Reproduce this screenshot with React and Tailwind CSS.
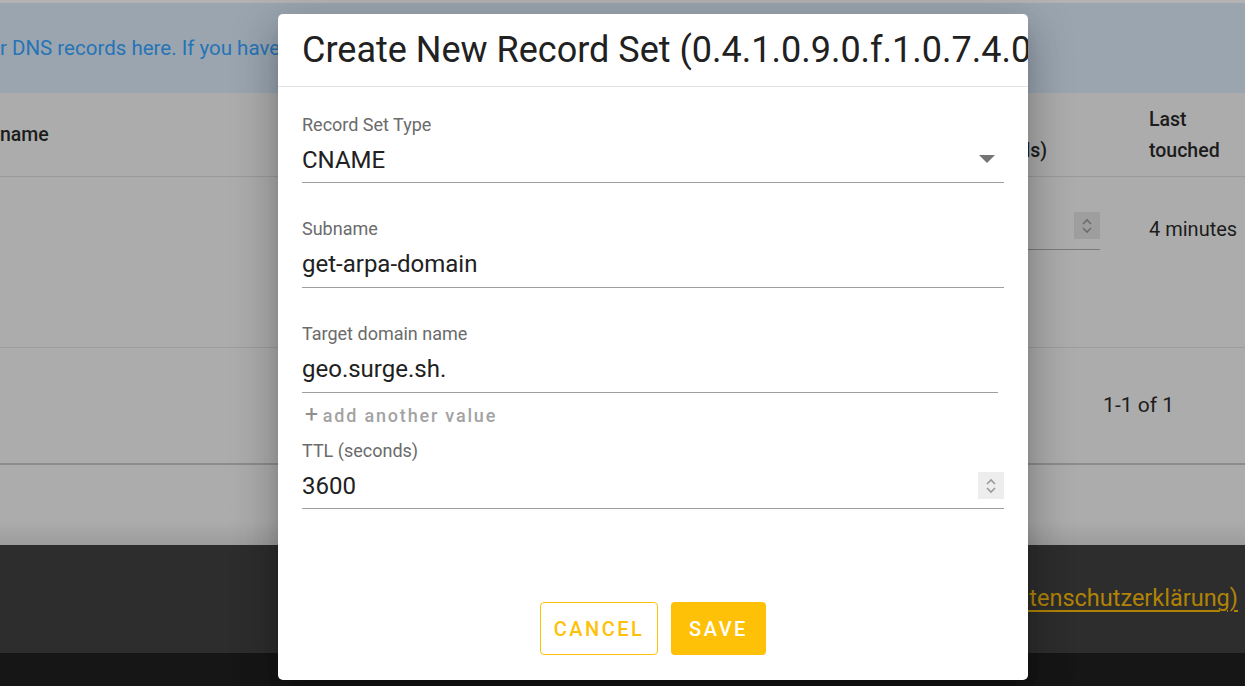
import React from 'react';

function Spinner({ bg = 'bg-[#ededed]', stroke = '#9a9a9a' }) {
  return (
    <div className={`flex h-[27px] w-[26px] flex-col items-center justify-center ${bg}`}>
      <svg width="12" height="18" viewBox="0 0 12 18" fill="none" stroke={stroke} strokeWidth="1.6">
        <path d="M2 7 L6 3 L10 7" />
        <path d="M2 11 L6 15 L10 11" />
      </svg>
    </div>
  );
}

function Field({ label, value, className = '', children, valueH = 'h-[47px]' }) {
  return (
    <div className={className}>
      <div className="h-[24px] text-[18px] leading-[24px] text-[#6b6b6b]">{label}</div>
      <div className={`flex items-center ${valueH} border-b border-[#9e9e9e] text-[24px] text-[#212121]`}>
        <span className="flex-1">{value}</span>
        {children}
      </div>
    </div>
  );
}

export default function App() {
  return (
    <div className="relative h-[686px] w-full overflow-hidden font-['Roboto',sans-serif]">
      {/* Page behind the dialog (already dimmed) */}
      <div className="flex h-full flex-col">
        <div className="h-[3px] bg-[#b3b3b3]" />
        <div className="flex h-[90px] items-center bg-[#9aa5b0] text-[20.5px] text-[#2674b6] whitespace-nowrap">
          r DNS records here. If you have any questions, please contact support.
        </div>
        <div className="flex h-[84px] items-center border-b border-[#9a9a9a] bg-[#acacac] text-[19.5px] font-medium text-[#1c1c1c]">
          <span>name</span>
          <div className="flex-1" />
          <div className="flex w-[121px] justify-end whitespace-nowrap pr-[102px] pt-[31px] leading-[31px]">(seconds)</div>
          <div className="w-[96px] leading-[31px]">
            Last
            <br />
            touched
          </div>
        </div>
        <div className="flex h-[171px] items-start border-b border-[#9c9c9c] bg-[#acacac] text-[20px] text-[#1c1c1c]">
          <div className="flex-1" />
          <div className="mr-[49px] mt-[35px] flex h-[38px] w-[72px] items-start justify-end border-b border-[#7a7a7a]">
            <Spinner bg="bg-[#9e9e9e]" stroke="#6c6c6c" />
          </div>
          <div className="mt-[40px] w-[96px] whitespace-nowrap leading-[24px]">4 minutes</div>
        </div>
        <div className="flex h-[117px] items-center justify-end border-b-2 border-[#8c8c8c] bg-[#acacac] pr-[71px] text-[21px] text-[#1c1c1c]">
          1-1 of 1
        </div>
        <div className="h-[80px] bg-gradient-to-b from-[#acacac] from-70% to-[#9c9c9c]" />
        <div className="flex h-[108px] items-center justify-end bg-[#2d2d2d] pr-[7px] text-[23.5px] text-[#b08306]">
          <span className="underline underline-offset-4">Impressum (Datenschutzerklärung)</span>
        </div>
        <div className="h-[33px] bg-[#161616]" />
      </div>

      {/* Dialog */}
      <div className="absolute left-[278px] top-[14px] flex h-[666px] w-[750px] flex-col overflow-hidden rounded-[5px] bg-white shadow-[0_11px_15px_-7px_rgba(0,0,0,0.2),0_24px_38px_3px_rgba(0,0,0,0.14),0_9px_46px_8px_rgba(0,0,0,0.12)]">
        <div className="flex h-[73px] shrink-0 items-center border-b border-[#e3e3e3] px-[24px]">
          <h2 className="whitespace-nowrap text-[36px] font-normal text-[#212121]">
            Create New Record Set (0.4.1.0.9.0.f.1.0.7.4.0.1.0.0.2.ip6.arpa)
          </h2>
        </div>

        <div className="flex-1 px-[24px] pt-[26px]">
          <Field label="Record Set Type" value="CNAME" valueH="h-[46px]">
            <svg width="16" height="9" viewBox="0 0 16 9" className="mr-[9px]">
              <path d="M0 0 H16 L8 8 Z" fill="#757575" />
            </svg>
          </Field>
          <Field label="Subname" value="get-arpa-domain" className="mt-[34px]" />
          <Field label="Target domain name" value="geo.surge.sh." className="mr-[6px] mt-[34px]" />
          <div className="mt-[10px] flex h-[24px] items-center text-[18px] font-medium tracking-[1.8px] text-[#a3a3a3]">
            <span className="ml-[3px] mr-[3px] text-[23px] font-normal text-[#8f8f8f]">+</span>
            add another value
          </div>
          <Field label="TTL (seconds)" value="3600" className="mt-[12px]" valueH="h-[46px]">
            <Spinner />
          </Field>
        </div>

        <div className="flex shrink-0 justify-center gap-[13px] pb-[25px]">
          <button className="flex h-[53px] w-[118px] items-center justify-center rounded-[4px] border border-[#ffc107] bg-white text-[20px] font-medium tracking-[2.5px] text-[#ffc107]">
            CANCEL
          </button>
          <button className="flex h-[53px] w-[95px] items-center justify-center rounded-[4px] bg-[#ffc107] text-[20px] font-medium tracking-[2.5px] text-white">
            SAVE
          </button>
        </div>
      </div>
    </div>
  );
}
